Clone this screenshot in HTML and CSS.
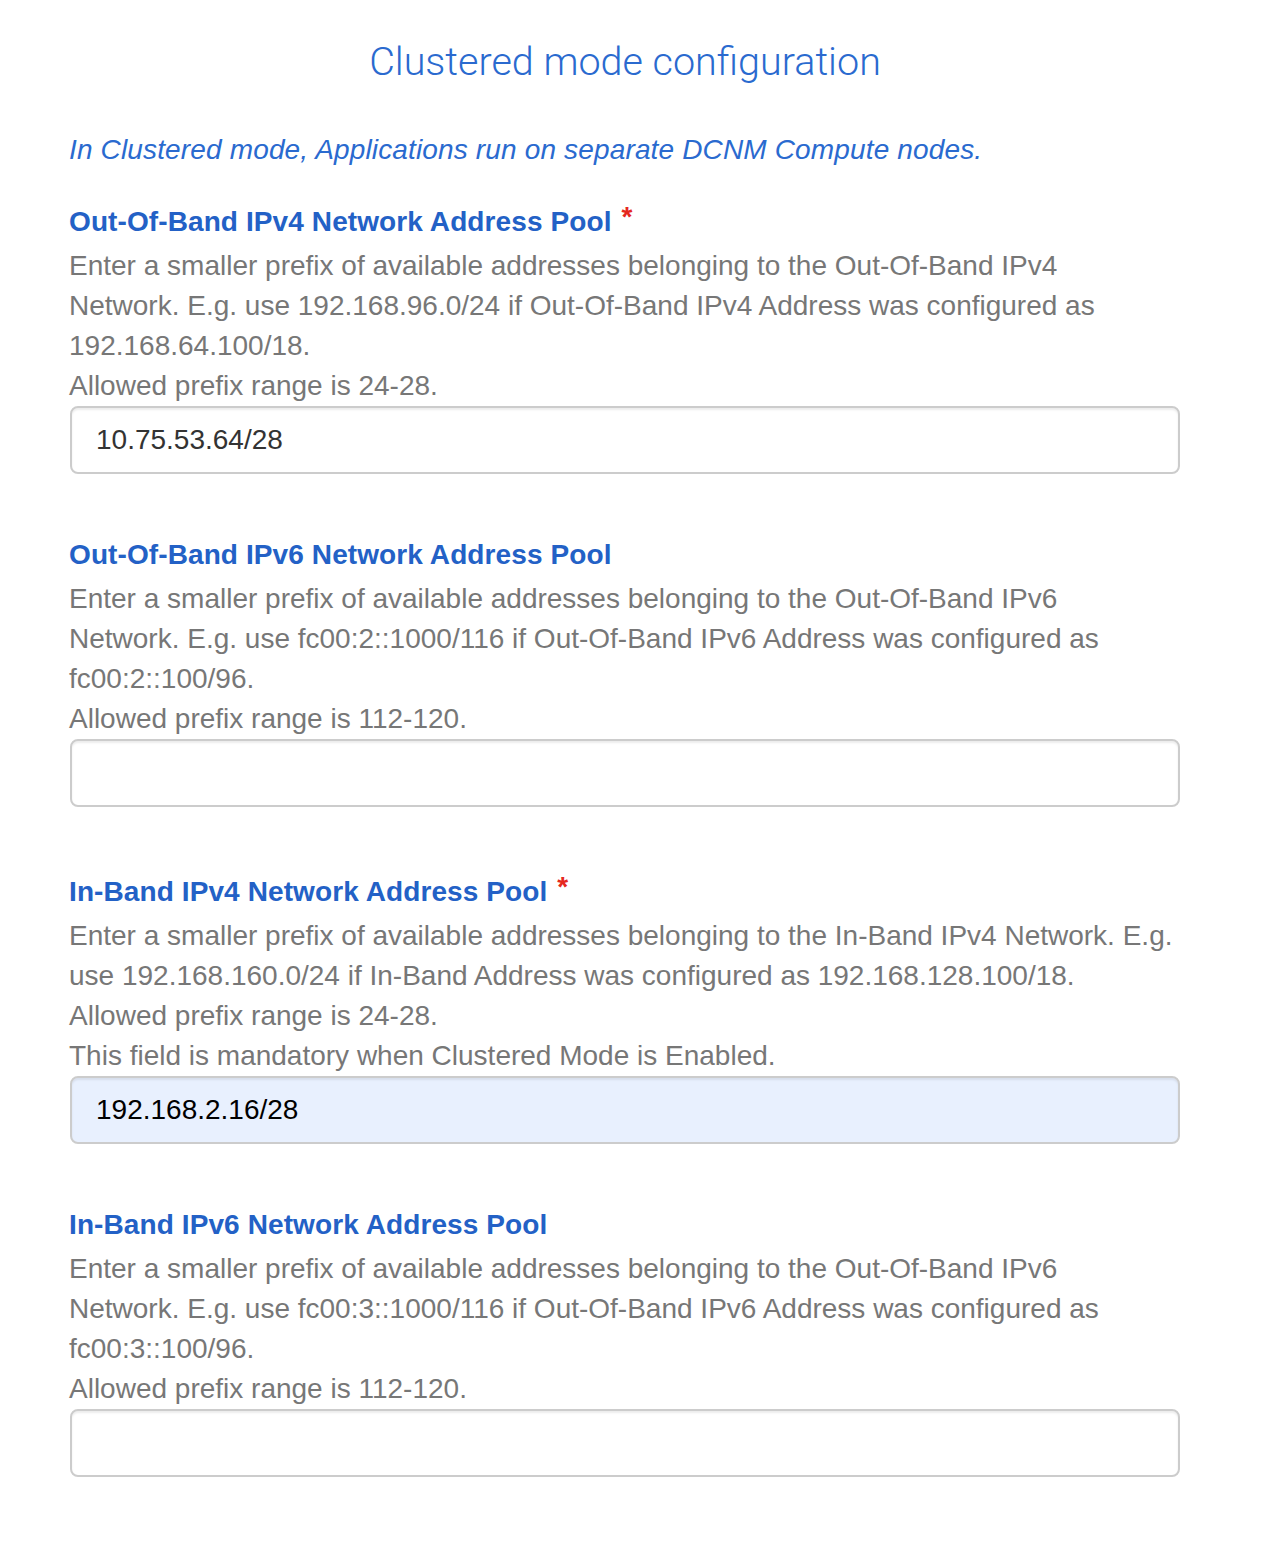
FILE: index.html
```html
<!DOCTYPE html>
<html lang="en">
<head>
<meta charset="utf-8">
<title>Clustered mode configuration</title>
<link rel="stylesheet" href="styles.css">
</head>
<body>
<div class="page">
  <h1 class="title">Clustered mode configuration</h1>
  <p class="intro">In Clustered mode, Applications run on separate DCNM Compute nodes.</p>

  <div class="form-group">
    <label class="label label-required">Out-Of-Band IPv4 Network Address Pool <span class="req">*</span></label>
    <div class="help">Enter a smaller prefix of available addresses belonging to the Out-Of-Band IPv4<br>Network. E.g. use 192.168.96.0/24 if Out-Of-Band IPv4 Address was configured as<br>192.168.64.100/18.<br>Allowed prefix range is 24-28.</div>
    <input class="input" type="text" value="10.75.53.64/28">
  </div>

  <div class="form-group">
    <label class="label">Out-Of-Band IPv6 Network Address Pool</label>
    <div class="help">Enter a smaller prefix of available addresses belonging to the Out-Of-Band IPv6<br>Network. E.g. use fc00:2::1000/116 if Out-Of-Band IPv6 Address was configured as<br>fc00:2::100/96.<br>Allowed prefix range is 112-120.</div>
    <input class="input" type="text" value="">
  </div>

  <div class="form-group">
    <label class="label label-required">In-Band IPv4 Network Address Pool <span class="req">*</span></label>
    <div class="help">Enter a smaller prefix of available addresses belonging to the In-Band IPv4 Network. E.g.<br>use 192.168.160.0/24 if In-Band Address was configured as 192.168.128.100/18.<br>Allowed prefix range is 24-28.<br>This field is mandatory when Clustered Mode is Enabled.</div>
    <input class="input input-filled" type="text" value="192.168.2.16/28">
  </div>

  <div class="form-group">
    <label class="label">In-Band IPv6 Network Address Pool</label>
    <div class="help">Enter a smaller prefix of available addresses belonging to the Out-Of-Band IPv6<br>Network. E.g. use fc00:3::1000/116 if Out-Of-Band IPv6 Address was configured as<br>fc00:3::100/96.<br>Allowed prefix range is 112-120.</div>
    <input class="input" type="text" value="">
  </div>
</div>
</body>
</html>
```

FILE: styles.css
```css
html, body {
  margin: 0;
  padding: 0;
  background: #ffffff;
}

body {
  font-family: "Liberation Sans", Arial, Helvetica, sans-serif;
  font-size: 28px;
  line-height: 40px;
  color: #777777;
}

.page {
  width: 1110px;
  margin-left: 70px;
  padding-top: 40px;
  padding-bottom: 60px;
}

.title {
  margin: 0;
  font-family: Roboto, "Liberation Sans", sans-serif;
  font-weight: 300;
  font-size: 39.5px;
  line-height: 44px;
  text-align: center;
  color: #2a6acf;
}

.intro {
  margin: 46px 0 28px -1px;
  font-style: italic;
  color: #2a6acf;
  letter-spacing: 0.15px;
}

.form-group {
  margin-bottom: 61px;
}

.label {
  display: block;
  margin-left: -1px;
  margin-bottom: 4px;
  font-weight: bold;
  color: #2361c6;
  letter-spacing: 0.1px;
}

.label-required {
  padding-top: 4px;
}

.req {
  position: relative;
  top: -5px;
  margin-left: 2px;
  color: #e5281e;
  font-weight: bold;
}

.help {
  margin-left: -1px;
  white-space: nowrap;
}

.input {
  display: block;
  box-sizing: border-box;
  width: 1110px;
  height: 68px;
  margin: 0;
  padding: 0 24px;
  border: 2px solid #cccccc;
  border-radius: 8px;
  background: #ffffff;
  box-shadow: inset 0 2px 2px rgba(0, 0, 0, 0.075);
  font-family: "Liberation Sans", Arial, Helvetica, sans-serif;
  font-size: 28px;
  color: #333333;
  outline: none;
}

.input-filled {
  background: #e8f0fe;
  color: #000000;
}
```
